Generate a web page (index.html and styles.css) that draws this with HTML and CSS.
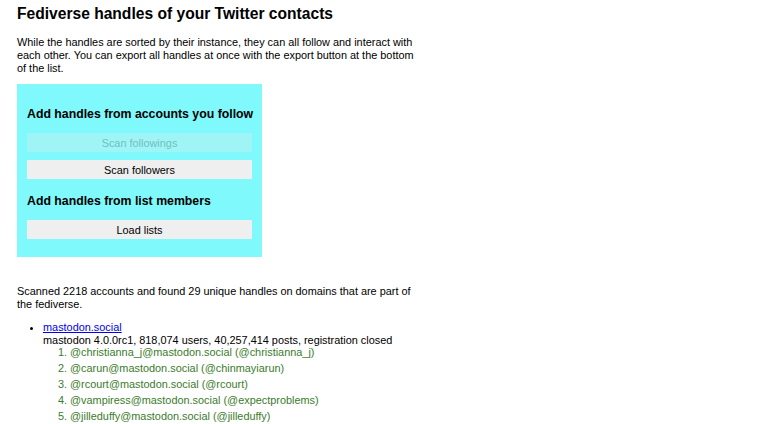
FILE: index.html
```html
<!DOCTYPE html>
<html>
<head>
<meta charset="utf-8">
<link rel="stylesheet" href="styles.css">
</head>
<body>
<main class="page">
  <h1 class="title">Fediverse handles of your Twitter contacts</h1>
  <p class="intro">While the handles are sorted by their instance, they can all follow and interact with each other. You can export all handles at once with the export button at the bottom of the list.</p>
  <section class="panel">
    <h2 class="panel-title">Add handles from accounts you follow</h2>
    <button class="btn" disabled>Scan followings</button>
    <button class="btn">Scan followers</button>
    <h2 class="panel-title">Add handles from list members</h2>
    <button class="btn">Load lists</button>
  </section>
  <p class="summary">Scanned 2218 accounts and found 29 unique handles on domains that are part of the fediverse.</p>
  <ul class="instances">
    <li>
      <a class="inst-link" href="#">mastodon.social</a>
      <div class="inst-meta">mastodon 4.0.0rc1, 818,074 users, 40,257,414 posts, registration closed</div>
      <ol class="handles">
        <li>@christianna_j@mastodon.social (@christianna_j)</li>
        <li>@carun@mastodon.social (@chinmayiarun)</li>
        <li>@rcourt@mastodon.social (@rcourt)</li>
        <li>@vampiress@mastodon.social (@expectproblems)</li>
        <li>@jilleduffy@mastodon.social (@jilleduffy)</li>
      </ol>
    </li>
  </ul>
</main>
</body>
</html>
```

FILE: styles.css
```css
html, body {
  margin: 0;
  padding: 0;
  background: #fff;
}
body {
  font-family: "Liberation Sans", Arial, sans-serif;
  font-size: 10.9px;
  line-height: 13px;
  color: #000;
}
.page {
  padding: 4px 17px 0 17px;
  width: 404px;
}
.title {
  font-size: 15.6px;
  line-height: 20px;
  font-weight: 700;
  margin: 0 0 12px 0;
}
.intro {
  margin: 0 0 9px 0;
}
.panel {
  background: #7ff9fb;
  width: 225px;
  padding: 23px 10px 18px 10px;
  display: flex;
  flex-direction: column;
}
.panel-title {
  font-size: 12.3px;
  line-height: 15px;
  font-weight: 700;
  white-space: nowrap;
  margin: 0 0 11px 0;
}
.btn + .btn {
  margin-top: 8px;
}
.btn + .panel-title {
  margin-top: 15px;
}
.btn {
  font-family: inherit;
  font-size: 10.9px;
  height: 19px;
  border: none;
  border-radius: 0;
  background: #efefef;
  color: #000;
  padding: 0;
  width: 100%;
}
.btn:disabled {
  background: #9ff5f5;
  color: #70c0c1;
}
.summary {
  margin: 28px 0 10px 0;
}
.instances {
  margin: 0;
  padding-left: 26px;
}
.inst-link {
  color: #0000ee;
}
.handles {
  margin: -1px 0 0 0;
  padding-left: 27px;
  color: #3b7b2c;
}
.handles li + li {
  margin-top: 3px;
}
```
